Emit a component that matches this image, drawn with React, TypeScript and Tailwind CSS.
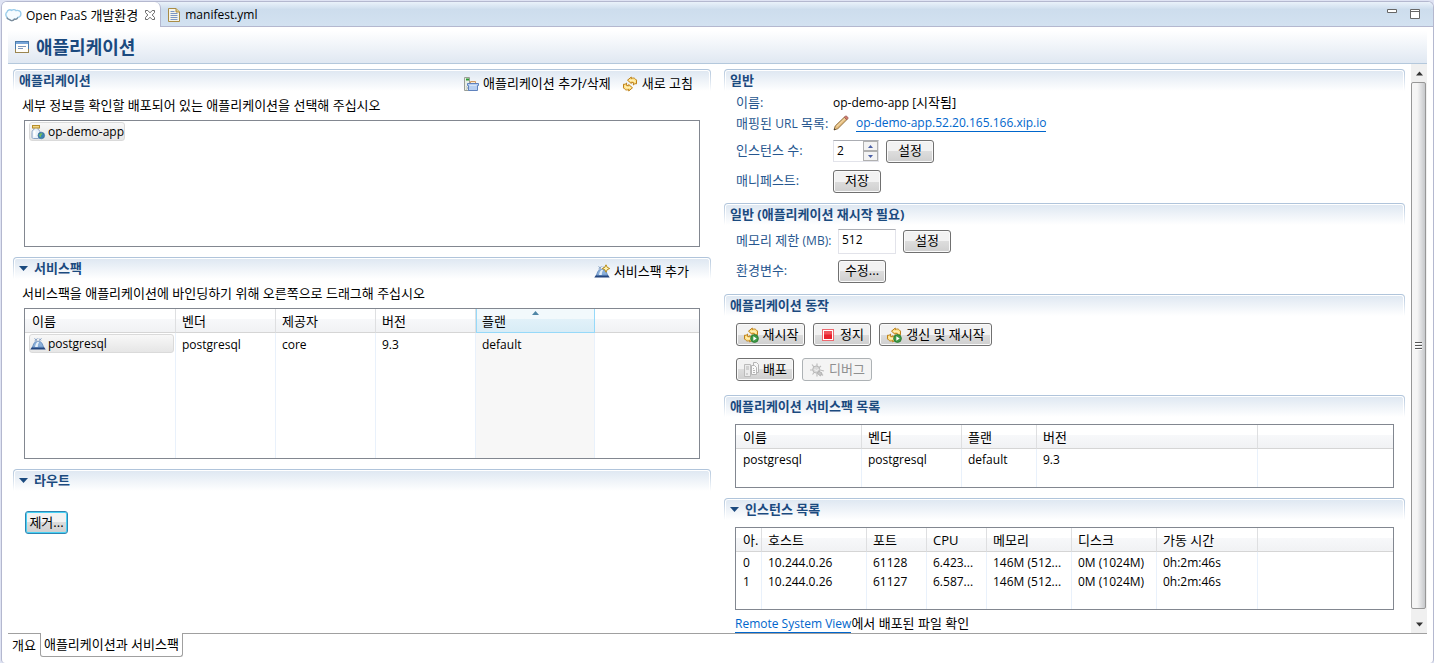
import { useState, type ReactNode } from 'react';

type IconProps = { className?: string };

function CloudIcon() {
  return (
    <svg width="17" height="16" viewBox="0 0 17 16" aria-hidden="true">
      <path d="M1.800 10C.4 8.500.5 6 2 5c.5-2 3-2.800 4.600-1.600C8 2.200 10 2.400 11 3.600c2.400-.7 4.800.6 4.900 2.900.1 2.500-1.400 3.900-3.200 3.900-.6 1.700-2.400 2-3.400 1.600-1 1.900-3.700 2.200-4.800.6C3.200 12.400 2.100 11.400 1.800 10z" fill="#f6fcff" stroke="#9accea" strokeWidth="1.400" />
      <path d="M1.800 10.600c.8 1.500 2 1.900 3 2 1.200 1.500 3.700 1.200 4.600-.5 1.400.4 2.900-.2 3.500-1.500" fill="none" stroke="#7d8c99" strokeWidth="1.200" />
    </svg>
  );
}

function CloseIcon() {
  return (
    <svg width="12" height="12" viewBox="0 0 12 12" aria-hidden="true">
      <path d="M1.500 1.500h2.300L6 3.800l2.200-2.300h2.300v2L8.200 6l2.300 2.500v2H8.200L6 8.200l-2.200 2.300H1.500v-2L3.800 6 1.500 3.500z" fill="#fff" stroke="#6a6a6a" strokeWidth="1" />
    </svg>
  );
}

function FileIcon() {
  return (
    <svg width="12" height="14" viewBox="0 0 12 14" aria-hidden="true">
      <path d="M.5.5h7.500l3.500 3.500v9.500H.5z" fill="#f6f5ea" stroke="#a98c45" />
      <path d="M8 .5V4h3.500" fill="#e8cf84" stroke="#a98c45" />
      <path d="M2.500 3.500h4M2.500 5.500h7M2.500 7.500h7M2.500 9.500h7M2.500 11.500h7" stroke="#7b96c4" />
    </svg>
  );
}

function FormIcon() {
  return (
    <svg width="14" height="12" viewBox="0 0 14 12" aria-hidden="true">
      <rect x=".5" y=".5" width="13" height="11" fill="#fffefa" stroke="#9b8650" />
      <path d="M.5 8V.5h13V8" fill="none" stroke="#4a7cae" />
      <path d="M1 1h12v2H1z" fill="#79a6d8" />
      <path d="M3 5.500h8M3 7.500h5" stroke="#7c97bd" />
    </svg>
  );
}

function JarIcon() {
  return (
    <svg width="16" height="16" viewBox="0 0 16 16" aria-hidden="true">
      <path d="M4 3.500v2c-1.500.6-2 1.500-2 3V13c0 1 .6 1.500 1.500 1.500h5c1 0 1.500-.5 1.500-1.500V8.500c0-1.500-.5-2.400-2-3v-2z" fill="#e9f1fb" stroke="#8aa2c4" />
      <path d="M4.500 6.500v6" stroke="#fff" strokeWidth="2" />
      <rect x="2.500" y="1.500" width="7" height="2.500" fill="#f2d583" stroke="#b58d2a" />
      <circle cx="11.300" cy="11.500" r="3.300" fill="#3b83b5" stroke="#37698e" strokeWidth=".6" />
      <path d="M9 11c1-2 3-2 3.500-1.200-.4 1.500-1.800 1-1.500 2.500.3 1-1.200 1.300-2-1.300z" fill="#74bd5c" />
    </svg>
  );
}

function AppsIcon() {
  return (
    <svg width="16" height="16" viewBox="0 0 16 16" aria-hidden="true">
      <path d="M1.500 1.500h5v13h-5z" fill="#e8eee6" stroke="#9a9f96" />
      <path d="M3 3.500h3" stroke="#2c9a35" strokeWidth="2" />
      <path d="M3 10.500l2 1.500-2 1.500" fill="none" stroke="#b9bdb6" />
      <path d="M7.500 7.500v-2h5v2" fill="#fbe9cf" stroke="#d09a62" />
      <path d="M4.500 7.500h11v2h-1v5h-9v-5h-1z" fill="#b7cff1" stroke="#5f82bd" />
      <path d="M6.500 9.500h7" stroke="#d5e3f7" />
    </svg>
  );
}

function RefreshIcon({ play = false }: { play?: boolean }) {
  return (
    <svg width="16" height="16" viewBox="0 0 16 16" aria-hidden="true">
      <g fill="#ffe28a" stroke="#bd8118" strokeWidth="1" strokeLinejoin="round">
        <path d="M5.500 4.200 9.300 1v1.700c1.300-1 3-.9 4 .2l1.200 1.200V7.800l-1.600-.1-1.500 1.300V6.500L9.300 6.300V7.500z" />
        <path d="M10.500 11.800 6.700 15v-1.700c-1.300 1-3 .9-4-.2l-1.200-1.200V8.200l1.600.1L4.600 7v2.500l2.100.2V8.500z" />
      </g>
      <path d="M7.500 4.300h3.200l2.300 1.200M8.500 11.700H5.300L3 10.500" fill="none" stroke="#fff7d6" strokeWidth=".8" />
      {play && (
        <g>
          <circle cx="11.500" cy="11.500" r="3.900" fill="#3d9a45" stroke="#28752f" strokeWidth=".8" />
          <path d="M10.300 9.200v4.600l3.400-2.300z" fill="#fff" />
        </g>
      )}
    </svg>
  );
}

function BellIcon({ star = false }: { star?: boolean }) {
  return (
    <svg width="16" height="16" viewBox="0 0 16 16" aria-hidden="true">
      <path d="M.3 13.500 2 11h12l1.700 2.500z" fill="#24467f" />
      <path d="M2.500 11.200C3.200 8.500 4.200 6.500 5.500 5.800h5c1.300.7 2.300 2.700 3 5.400z" fill="#8aafd9" stroke="#5c86bb" strokeWidth=".8" />
      <path d="M5 11c.5-2.500 1.200-4 2.300-5h1.900C8.200 7.500 7.800 9 7.800 11z" fill="#e3eef9" />
      <path d="M4.500 2.500l3 2.500M4.500 5l3-2.500M8.500 5l3-2.500M9 2.500l2 2" stroke="#7f9cc2" strokeWidth="1" />
      {star && (
        <path d="M12 .8l1.200 2.500 2.500 1.200-2.500 1.200L12 8.200l-1.200-2.500-2.500-1.200 2.500-1.200z" fill="#fff3b0" stroke="#b88b19" strokeWidth="1" />
      )}
    </svg>
  );
}

function PencilIcon() {
  return (
    <svg width="16" height="16" viewBox="0 0 16 16" aria-hidden="true">
      <path d="M1 15l1.200-4L11.500 2l2.500 2.500L4.800 13.700z" fill="#e6bd7c" stroke="#8a6a3d" strokeWidth=".9" />
      <path d="M3.500 11.800 12.200 3.300" stroke="#f8e2b8" strokeWidth="1" />
      <path d="M11.200 2.200l1.200-1c1-.7 3.200 1.200 2.500 2.500l-1.100 1.100z" fill="#d0796d" stroke="#9a5a50" strokeWidth=".8" />
      <path d="M1 15l.5-1.800 1.300 1.300z" fill="#333" />
    </svg>
  );
}

function StopIcon() {
  return (
    <svg width="16" height="16" viewBox="0 0 16 16" aria-hidden="true">
      <rect x="2.500" y="2.500" width="11" height="11" fill="#fff" stroke="#ee6a70" />
      <rect x="4" y="4" width="8" height="8" fill="#e8222d" />
      <path d="M4 4h8v3.500H4z" fill="#f0525a" />
    </svg>
  );
}

function DeployIcon() {
  return (
    <svg width="16" height="16" viewBox="0 0 16 16" aria-hidden="true">
      <path d="M1.500 2.500h6v12h-6z" fill="#ececec" stroke="#bbb" />
      <path d="M3 5h3M3 7h3M3 12h2" stroke="#b5b5b5" />
      <path d="M10.500.5h3l2 2v8h-5z" fill="#f6f6f6" stroke="#b5b5b5" />
      <path d="M8.500 3.500h3l2 2v7h-5z" fill="#fafafa" stroke="#b5b5b5" />
      <path d="M10 6.500h1M10 8.500h2M10 10.500h2" stroke="#b5b5b5" />
    </svg>
  );
}

function BugIcon() {
  return (
    <svg width="16" height="16" viewBox="0 0 16 16" aria-hidden="true">
      <path d="M3 2.500l2 2.500M8 1.500V4M12 4l-2.500 2M15 9l-4-1M14 13.500l-3-3M8 14.500V11M3.500 12.500l2-2.500M1 8h3" stroke="#bdbdbd" strokeWidth="1.200" />
      <circle cx="7.200" cy="7.500" r="3.500" fill="#d9d9d9" stroke="#b8b8b8" />
      <path d="M9.500 9l3.500 2-1.500 3-3-2.500z" fill="#c6c6c6" stroke="#b3b3b3" />
      <path d="M5.500 7l2 2 2-2" fill="none" stroke="#f6f6f6" />
    </svg>
  );
}

function Triangle({ className = '' }: IconProps) {
  return (
    <svg className={className} width="9" height="5" viewBox="0 0 9 5" aria-hidden="true">
      <path d="M0 0h9L4.500 5z" fill="currentColor" />
    </svg>
  );
}

type SectionProps = {
  title: string;
  collapsible?: boolean;
  toolbar?: ReactNode;
  className?: string;
  children: ReactNode;
};

function Section({ title, collapsible, toolbar, className = '', children }: SectionProps) {
  const [open, setOpen] = useState(true);
  return (
    <section className={className}>
      <div className="h-[22px] rounded-t-[4px] bg-linear-to-b from-[#aec3da] to-white p-px pb-0">
        <div className="flex h-[21px] items-start justify-between rounded-t-[3px] border border-b-0 border-white bg-linear-to-b from-[#dfe8f2] to-white pl-1">
          <h2 className="text-[13px] leading-[18px] font-bold text-[#1b4a7f]">
            {collapsible ? (
              <button type="button" aria-expanded={open} onClick={() => setOpen(!open)} className="flex items-center gap-1.5">
                <Triangle className={open ? '' : '-rotate-90'} />
                {title}
              </button>
            ) : (
              title
            )}
          </h2>
          {toolbar}
        </div>
      </div>
      {open && children}
    </section>
  );
}

function ToolButton({ icon, label }: { icon: ReactNode; label: string }) {
  return (
    <button type="button" className="flex h-6 items-center gap-1 text-[13px] text-black">
      {icon}
      {label}
    </button>
  );
}

type PushProps = { icon?: ReactNode; label: string; focused?: boolean; disabled?: boolean; className?: string };

function PushButton({ icon, label, focused, disabled, className = '' }: PushProps) {
  const tone = focused
    ? 'border-[#2f86b3] bg-linear-to-b from-[#f2f2f2] from-50% via-[#dcdcdc] via-50% to-[#cfcfcf] text-black inset-ring inset-ring-[#48d2f5]'
    : disabled
      ? 'border-[#adb2b5] bg-[#f4f4f4] text-[#8f8f8f]'
      : 'border-[#707070] bg-linear-to-b from-[#f2f2f2] from-50% via-[#dddddd] via-50% to-[#cfcfcf] text-black inset-ring inset-ring-[#fafafa]';
  return (
    <button
      type="button"
      disabled={disabled}
      className={`flex h-[23px] items-center justify-center gap-1 rounded-[3px] border text-[13px] whitespace-nowrap ${tone} ${className}`}
    >
      {icon}
      {label}
    </button>
  );
}

type Column = { label: string; width?: string; sorted?: boolean };
type GridProps = { label: string; columns: Column[]; rows: ReactNode[][]; className: string };

function DataGrid({ label, columns, rows, className }: GridProps) {
  return (
    <div className={`border border-[#828790] ${className}`}>
      <table aria-label={label} className="h-full w-full table-fixed border-separate border-spacing-0">
        <colgroup>
          {columns.map((c, i) => (
            <col key={i} className={c.width} />
          ))}
          <col />
        </colgroup>
        <thead>
          <tr className="h-6">
            {columns.map((c, i) => (
              <th
                key={i}
                aria-sort={c.sorted ? 'ascending' : undefined}
                className={`relative h-6 overflow-hidden p-0 text-left text-[13px] leading-5 font-normal whitespace-nowrap ${
                  c.sorted
                    ? 'border-x border-b border-[#96d9f9] bg-linear-to-b from-[#f2f9fc] from-45% via-[#e1f1f9] via-45% to-[#d8ecf6] pl-[5px]'
                    : 'border-r border-b border-r-[#dedfe1] border-b-[#d5d5d5] bg-linear-to-b from-white from-45% via-[#f7f8fa] via-45% to-[#f1f2f4] pl-1.5 first:pl-[7px]'
                }`}
              >
                {c.sorted && (
                  <svg className="absolute top-[2px] left-1/2 -translate-x-1" width="7" height="4" viewBox="0 0 7 4" aria-hidden="true">
                    <path d="M0 4 3.500 0 7 4z" fill="#4f86a6" />
                  </svg>
                )}
                {c.label}
              </th>
            ))}
            <td className="border-b border-[#d5d5d5] bg-linear-to-b from-white from-45% via-[#f7f8fa] via-45% to-[#f1f2f4] p-0" />
          </tr>
        </thead>
        <tbody className="text-xs">
          {rows.map((row, r) => (
            <tr key={r} className="h-[19px]">
              {row.map((cell, i) => (
                <td
                  key={i}
                  className={`h-[19px] overflow-hidden border-r border-[#e9f1fb] whitespace-nowrap ${
                    columns[i].sorted ? 'bg-[#f7f7f7]' : ''
                  } ${typeof cell === 'string' ? 'p-0 pt-0.5 pl-1.5 leading-[17px] first:pl-[7px]' : 'p-0 pt-px pl-1'}`}
                >
                  {cell}
                </td>
              ))}
              <td className="p-0" />
            </tr>
          ))}
          <tr aria-hidden="true">
            {columns.map((c, i) => (
              <td key={i} className={`border-r border-[#e9f1fb] p-0 ${c.sorted ? 'bg-[#f7f7f7]' : ''}`} />
            ))}
            <td className="p-0" />
          </tr>
        </tbody>
      </table>
    </div>
  );
}

function LeftColumn() {
  return (
    <div className="min-w-0">
      <Section
        title="애플리케이션"
        toolbar={
          <div className="mt-px flex gap-[11px] pr-4">
            <ToolButton icon={<AppsIcon />} label="애플리케이션 추가/삭제" />
            <ToolButton icon={<RefreshIcon />} label="새로 고침" />
          </div>
        }
      >
        <div className="px-[11px]">
          <p className="mt-1 -ml-0.5 text-[13px] leading-5">세부 정보를 확인할 배포되어 있는 애플리케이션을 선택해 주십시오</p>
          <ul className="mt-[5px] h-[127px] border border-[#828790] px-1 py-px">
            <li className="flex h-[19px] w-fit items-center gap-0.5 rounded-[3px] border border-[#dadada] bg-linear-to-b from-[#f8f8f8] to-[#e6e6e6] text-xs">
              <JarIcon />
              op-demo-app
            </li>
          </ul>
        </div>
      </Section>

      <Section
        title="서비스팩"
        collapsible
        className="mt-2.5"
        toolbar={
          <div className="mt-px flex pr-5">
            <ToolButton icon={<BellIcon star />} label="서비스팩 추가" />
          </div>
        }
      >
        <div className="px-[11px]">
          <p className="mt-1 -ml-0.5 text-[13px] leading-5">서비스팩을 애플리케이션에 바인딩하기 위해 오른쪽으로 드래그해 주십시오</p>
          <DataGrid
            label="서비스팩"
            className="mt-[5px] h-[151px]"
            columns={[
              { label: '이름', width: 'w-[151px]' },
              { label: '벤더', width: 'w-[100px]' },
              { label: '제공자', width: 'w-[100px]' },
              { label: '버전', width: 'w-[100px]' },
              { label: '플랜', width: 'w-[119px]', sorted: true },
            ]}
            rows={[
              [
                <div className="mr-px flex h-[19px] items-center gap-0.5 rounded-[3px] border border-[#dadada] bg-linear-to-b from-[#f8f8f8] to-[#e6e6e6]">
                  <BellIcon />
                  postgresql
                </div>,
                'postgresql',
                'core',
                '9.3',
                'default',
              ],
            ]}
          />
        </div>
      </Section>

      <Section title="라우트" collapsible className="mt-2.5">
        <div className="px-3 pt-5">
          <PushButton label="제거..." focused className="w-[43px]" />
        </div>
      </Section>
    </div>
  );
}

function RightColumn() {
  return (
    <div className="min-w-0">
      <Section title="일반">
        <div className="grid grid-cols-[97px_1fr] items-center pt-px pl-3 text-[13px] text-[#27578f]">
          <span className="leading-5 whitespace-nowrap">이름:</span>
          <span className="leading-5 text-black">
            <span className="text-xs">op-demo-app [</span>시작됨]
          </span>
          <span className="pb-0.5 leading-5 whitespace-nowrap">
            매핑된 <span className="text-xs">URL</span> 목록:
          </span>
          <span className="flex h-6 items-center gap-[7px] pb-0.5">
            <button type="button" aria-label="URL 편집">
              <PencilIcon />
            </button>
            <a href="#app-url" className="border-b border-[#0066cc] text-xs leading-4 text-[#0066cc]">
              op-demo-app.52.20.165.166.xip.io
            </a>
          </span>
          <label htmlFor="instances">인스턴스 수:</label>
          <div className="flex h-[30px] items-center gap-[7px]">
            <div className="flex h-[22px] w-[46px] border border-[#e2e3ea] border-t-[#abadb3]">
              <input id="instances" defaultValue="2" className="w-0 grow px-[3px] text-xs text-black outline-none" />
              <div className="flex w-[15px] flex-col text-[#4a5fa5]">
                <button type="button" aria-label="증가" className="flex grow items-center justify-center border border-[#b0b0b0] bg-[#f3f3f3]">
                  <svg width="5" height="3" viewBox="0 0 5 3" aria-hidden="true">
                    <path d="M0 3 2.500 0 5 3z" fill="currentColor" />
                  </svg>
                </button>
                <button type="button" aria-label="감소" className="flex grow items-center justify-center border border-[#b0b0b0] bg-[#f3f3f3]">
                  <svg width="5" height="3" viewBox="0 0 5 3" aria-hidden="true">
                    <path d="M0 0h5L2.500 3z" fill="currentColor" />
                  </svg>
                </button>
              </div>
            </div>
            <PushButton label="설정" className="w-12" />
          </div>
          <span>매니페스트:</span>
          <div className="flex h-[30px] items-center">
            <PushButton label="저장" className="w-12" />
          </div>
        </div>
      </Section>

      <Section title="일반 (애플리케이션 재시작 필요)" className="mt-[7px]">
        <div className="grid grid-cols-[102px_1fr] items-center pt-px pl-3 text-[13px] text-[#27578f]">
          <label htmlFor="memory" className="whitespace-nowrap">
            메모리 제한 <span className="text-xs">(MB):</span>
          </label>
          <div className="flex h-[30px] items-center gap-[7px]">
            <input
              id="memory"
              defaultValue="512"
              className="h-[25px] w-[58px] border border-[#e2e3ea] border-t-[#abadb3] px-[3px] pb-1 text-xs text-black outline-none"
            />
            <PushButton label="설정" className="w-12" />
          </div>
          <span>환경변수:</span>
          <div className="flex h-[30px] items-center">
            <PushButton label="수정..." className="w-12" />
          </div>
        </div>
      </Section>

      <Section title="애플리케이션 동작" className="mt-2">
        <div className="flex flex-col gap-3 pt-[7px] pl-3">
          <div className="flex gap-2">
            <PushButton icon={<RefreshIcon play />} label="재시작" className="w-[69px]" />
            <PushButton icon={<StopIcon />} label="정지" className="w-[58px]" />
            <PushButton icon={<RefreshIcon play />} label="갱신 및 재시작" className="w-[113px]" />
          </div>
          <div className="flex gap-2">
            <PushButton icon={<DeployIcon />} label="배포" className="w-[58px]" />
            <PushButton icon={<BugIcon />} label="디버그" disabled className="w-[70px]" />
          </div>
        </div>
      </Section>

      <Section title="애플리케이션 서비스팩 목록" className="mt-[14px]">
        <div className="px-[11px] pt-[7px]">
          <DataGrid
            label="애플리케이션 서비스팩 목록"
            className="h-16"
            columns={[
              { label: '이름', width: 'w-[126px]' },
              { label: '벤더', width: 'w-[100px]' },
              { label: '플랜', width: 'w-[75px]' },
              { label: '버전', width: 'w-[221px]' },
            ]}
            rows={[['postgresql', 'postgresql', 'default', '9.3']]}
          />
        </div>
      </Section>

      <Section title="인스턴스 목록" collapsible className="mt-2.5">
        <div className="px-[11px] pt-[7px]">
          <DataGrid
            label="인스턴스 목록"
            className="h-[83px]"
            columns={[
              { label: '아.', width: 'w-[26px]' },
              { label: '호스트', width: 'w-[105px]' },
              { label: '포트', width: 'w-[60px]' },
              { label: 'CPU', width: 'w-[60px]' },
              { label: '메모리', width: 'w-[85px]' },
              { label: '디스크', width: 'w-[85px]' },
              { label: '가동 시간', width: 'w-[101px]' },
            ]}
            rows={[
              ['0', '10.244.0.26', '61128', '6.423...', '146M (512...', '0M (1024M)', '0h:2m:46s'],
              ['1', '10.244.0.26', '61127', '6.587...', '146M (512...', '0M (1024M)', '0h:2m:46s'],
            ]}
          />
          <p className="mt-1 text-[13px] leading-[18px]">
            <a href="#remote-system-view" className="border-b border-[#0066cc] text-xs text-[#0066cc]">
              Remote System View
            </a>
            에서 배포된 파일 확인
          </p>
        </div>
      </Section>
    </div>
  );
}

function ScrollBar() {
  return (
    <div className="flex w-4 shrink-0 flex-col bg-[#f0f0f0]">
      <button type="button" aria-label="위로 스크롤" className="flex h-[18px] items-center justify-center text-[#333]">
        <Triangle className="w-[7px] rotate-180" />
      </button>
      <div className="mr-px flex grow flex-col items-center justify-center gap-px rounded-[2px] border border-[#979797] bg-linear-to-r from-[#f5f5f5] from-40% to-[#c6c8cb]">
        <span className="h-0.5 w-[7px] border-t border-[#555] bg-white" />
        <span className="h-0.5 w-[7px] border-t border-[#555] bg-white" />
        <span className="h-0.5 w-[7px] border-t border-[#555] bg-white" />
      </div>
      <button type="button" aria-label="아래로 스크롤" className="flex h-6 items-center justify-center pt-1.5 text-[#333]">
        <Triangle className="w-[7px]" />
      </button>
    </div>
  );
}

export default function App() {
  return (
    <div className="flex min-h-screen bg-[#dfe3f3] pt-px pl-px font-['Open_Sans','Noto_Sans_CJK_KR',sans-serif] text-black">
      <div className="flex grow flex-col overflow-hidden rounded-[6px] rounded-b-[4px] border border-b-0 border-[#b4b8cf] bg-white">
        <div className="flex h-[25px] items-stretch bg-linear-to-b from-[#eaf2fa] via-[#cddded] via-30% to-[#d3e2f1]" role="tablist">
          <div className="z-10 flex items-center gap-1.5 rounded-tr-[6px] border-r border-[#b4b8cf] bg-white pr-1 pl-[3px]">
            <button type="button" role="tab" aria-selected="true" className="flex items-center gap-1 text-[13px] leading-6 whitespace-nowrap">
              <CloudIcon />
              <span>
                <span className="text-xs">Open PaaS</span> 개발환경
              </span>
            </button>
            <button type="button" aria-label="닫기">
              <CloseIcon />
            </button>
          </div>
          <div className="flex grow items-center justify-between border-b border-[#b4b8cf] pr-[13px] pl-[7px]">
            <button type="button" role="tab" aria-selected="false" className="flex items-center gap-[5px] pt-0.5 text-xs">
              <FileIcon />
              manifest.yml
            </button>
            <div className="flex items-start gap-[13px]">
              <button type="button" aria-label="최소화">
                <svg width="10" height="10" viewBox="0 0 10 10" aria-hidden="true">
                  <path d="M.5.5h9v3h-9z" fill="#fff" stroke="#666" />
                </svg>
              </button>
              <button type="button" aria-label="최대화">
                <svg width="10" height="10" viewBox="0 0 10 10" aria-hidden="true">
                  <path d="M.5.5h9v9h-9zM.5 2.500h9" fill="#fff" stroke="#666" />
                </svg>
              </button>
            </div>
          </div>
        </div>

        <div className="flex grow flex-col px-1.5">
          <header className="flex h-[37px] items-center gap-[7px] border-b border-[#b4c8dc] bg-linear-to-b from-white from-10% to-[#e0e8f2] pt-1 pl-[7px]">
            <FormIcon />
            <h1 className="text-[18px] leading-6 font-bold text-[#1b4a7f]">애플리케이션</h1>
          </header>

          <main className="flex grow">
            <div className="grid grow grid-cols-[698fr_681fr] gap-[13px] pt-[5px] pr-1.5 pl-[5px]">
              <LeftColumn />
              <RightColumn />
            </div>
            <ScrollBar />
          </main>

          <footer className="flex h-[30px] items-start text-[13px]" role="tablist">
            <button type="button" role="tab" aria-selected="false" className="h-6 border-t border-[#a0a0a0] px-1">
              개요
            </button>
            <button type="button" role="tab" aria-selected="true" className="h-6 rounded-b-[3px] border border-t-0 border-[#a0a0a0] px-[3px] whitespace-nowrap">
              애플리케이션과 서비스팩
            </button>
            <div className="grow border-t border-[#a0a0a0]" />
          </footer>
        </div>
      </div>
    </div>
  );
}
